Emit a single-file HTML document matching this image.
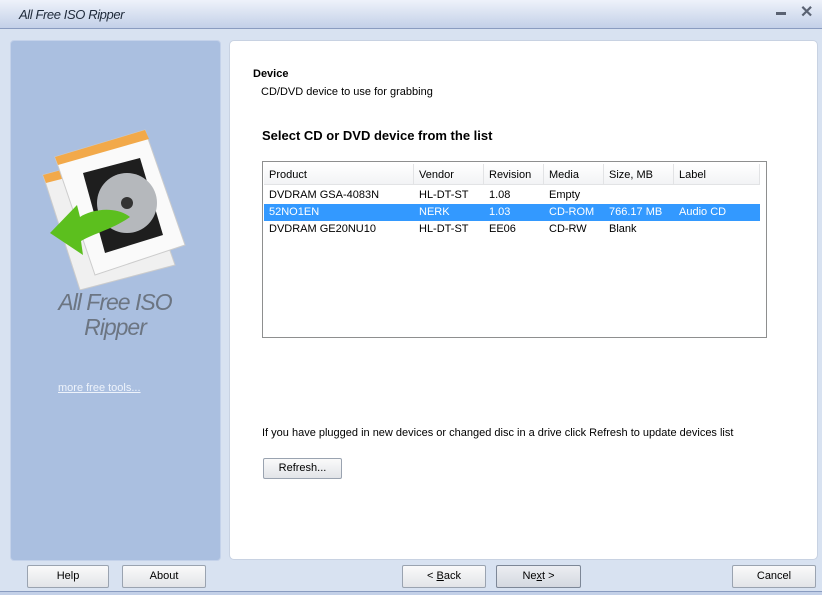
<!DOCTYPE html>
<html><head><style>
*{margin:0;padding:0;box-sizing:border-box}
body{width:822px;height:595px;overflow:hidden;background:#d8e2f1;font-family:"Liberation Sans",sans-serif;font-size:11px;color:#000;position:relative}
.a{position:absolute}
.title{left:0;top:0;width:822px;height:29px;background:linear-gradient(#eef2fa,#c3d0e8);border-bottom:1px solid #8a9cc0}
.btn{position:absolute;height:23px;border:1px solid #9aa3b0;border-radius:2px;background:linear-gradient(#fafafa,#e2e4e8);text-align:center;line-height:21px;font-size:11px}
.hd,.row{position:absolute;left:264px;width:496px;height:17px}
.c{position:absolute;top:2px;white-space:nowrap}
</style></head><body>
<div class="a title"></div>
<div class="a" style="left:19px;top:7px;font-style:italic;font-size:13px;color:#1f2a3a;letter-spacing:-0.4px">All Free ISO Ripper</div>
<div class="a" style="left:776px;top:12px;width:10px;height:3px;background:#5a6272"></div>
<div class="a" style="left:800px;top:2px;font-size:16px;font-weight:bold;color:#5a6272">✕</div>
<div class="a" style="left:10px;top:40px;width:211px;height:521px;background:#aabfe0;border:1px solid #c4d2ea;border-radius:4px"></div>
<svg class="a" style="left:35px;top:125px" width="165" height="165" viewBox="0 0 165 165">
<polygon points="8,50 100,25 140,140 45,165" fill="#f0f0f0" stroke="#ccc"/>
<polygon points="8,50 100,25 104,34 11,58" fill="#f2a94a"/>
<polygon points="20,32 110,5 150,120 60,150" fill="#fafafa" stroke="#ccc"/>
<polygon points="20,32 110,5 114,14 23,40" fill="#f2a94a"/>
<polygon points="48,48 105,33 128,110 70,128" fill="#1e1e1e"/>
<circle cx="92" cy="78" r="30" fill="#b5b8bc"/><circle cx="92" cy="78" r="6" fill="#333"/>
<path d="M95,92 C80,80 55,85 45,92 L42,80 L15,108 L48,130 L46,116 C60,108 78,104 95,92Z" fill="#5cbf1e"/>
</svg>
<div class="a" style="left:20px;top:290px;width:190px;text-align:center;font-style:italic;font-size:23px;line-height:25px;color:#6c7582;letter-spacing:-1px">All Free ISO<br>Ripper</div>
<div class="a" style="left:58px;top:382px;color:#eef3fb;text-decoration:underline">more free tools...</div>
<div class="a" style="left:229px;top:40px;width:589px;height:520px;background:#fff;border:1px solid #c8d2e2;border-radius:5px"></div>
<div class="a" style="left:253px;top:68px;font-weight:bold">Device</div>
<div class="a" style="left:261px;top:86px">CD/DVD device to use for grabbing</div>
<div class="a" style="left:262px;top:128px;font-weight:bold;font-size:13px">Select CD or DVD device from the list</div>
<div class="a" style="left:262px;top:161px;width:505px;height:177px;border:1px solid #8e8f8f;background:#fff"></div>
<div class="hd" style="top:164px;height:21px;background:linear-gradient(#fff,#f2f3f5);border-bottom:1px solid #e2e3e5">
<div class="c" style="left:5px;top:5px">Product</div><div class="c" style="left:155px;top:5px">Vendor</div><div class="c" style="left:225px;top:5px">Revision</div><div class="c" style="left:285px;top:5px">Media</div><div class="c" style="left:345px;top:5px">Size, MB</div><div class="c" style="left:415px;top:5px">Label</div>
<div class="a" style="left:149px;top:0;width:1px;height:21px;background:#e2e3e5"></div><div class="a" style="left:219px;top:0;width:1px;height:21px;background:#e2e3e5"></div><div class="a" style="left:279px;top:0;width:1px;height:21px;background:#e2e3e5"></div><div class="a" style="left:339px;top:0;width:1px;height:21px;background:#e2e3e5"></div><div class="a" style="left:409px;top:0;width:1px;height:21px;background:#e2e3e5"></div><div class="a" style="left:495px;top:0;width:1px;height:21px;background:#e2e3e5"></div>
</div>
<div class="row" style="top:187px"><div class="c" style="left:5px">DVDRAM GSA-4083N</div><div class="c" style="left:155px">HL-DT-ST</div><div class="c" style="left:225px">1.08</div><div class="c" style="left:285px">Empty</div></div>
<div class="row" style="top:204px;background:#3399ff;color:#fff"><div class="c" style="left:5px">52NO1EN</div><div class="c" style="left:155px">NERK</div><div class="c" style="left:225px">1.03</div><div class="c" style="left:285px">CD-ROM</div><div class="c" style="left:345px">766.17 MB</div><div class="c" style="left:415px">Audio CD</div></div>
<div class="row" style="top:221px"><div class="c" style="left:5px">DVDRAM GE20NU10</div><div class="c" style="left:155px">HL-DT-ST</div><div class="c" style="left:225px">EE06</div><div class="c" style="left:285px">CD-RW</div><div class="c" style="left:345px">Blank</div></div>
<div class="a" style="left:262px;top:427px">If you have plugged in new devices or changed disc in a drive click Refresh to update devices list</div>
<div class="btn" style="left:263px;top:458px;width:79px;height:21px;line-height:19px">Refresh...</div>
<div class="btn" style="left:27px;top:565px;width:82px">Help</div>
<div class="btn" style="left:122px;top:565px;width:84px">About</div>
<div class="btn" style="left:402px;top:565px;width:84px">&lt; <u>B</u>ack</div>
<div class="btn" style="left:496px;top:565px;width:85px;background:linear-gradient(#eceef2,#d4d8e0);border-color:#7d8797">Ne<u>x</u>t &gt;</div>
<div class="btn" style="left:732px;top:565px;width:84px">Cancel</div>
<div class="a" style="left:0;top:591px;width:822px;height:4px;background:#c3d0e8;border-top:1px solid #8a9cc0"></div>
</body></html>
